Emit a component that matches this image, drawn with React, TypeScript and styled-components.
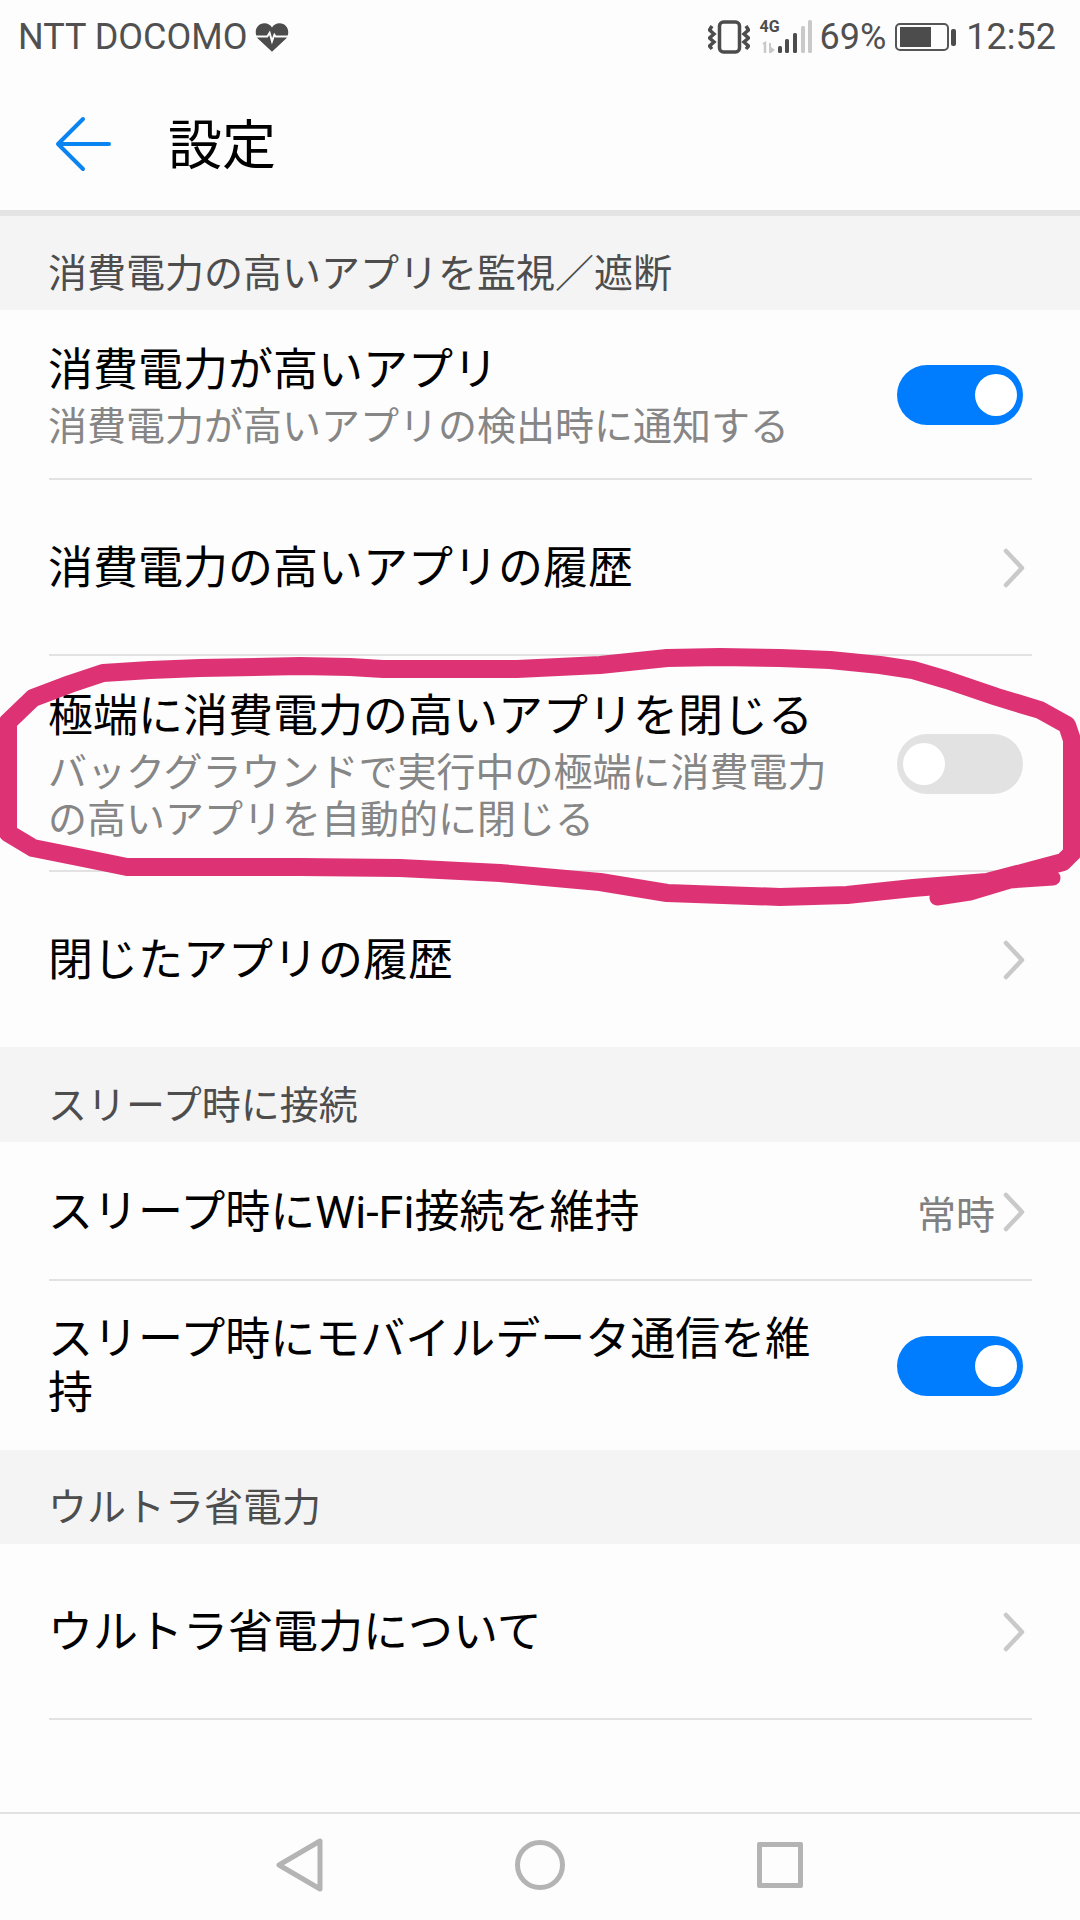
import React from 'react';
import styled, { createGlobalStyle } from 'styled-components';

const GlobalStyle = createGlobalStyle`
  html, body {
    margin: 0;
    padding: 0;
    background: #fdfdfd;
  }
`;

const FONT = `Roboto, "Noto Sans CJK JP", sans-serif`;

// hand drawn marker ring, traced from the screenshot
const RING =
  'M8 722 L33 698 L70 684 L103 673 L150 670 L200 668 L300 666 L350 667 L383 669 L517 669 L600 665 L667 658 L720 657 ' +
  'L780 658 L830 660 L880 665 L913 670 L947 680 L997 697 L1040 710 L1067 725 L1072 740 L1072 853 L1063 862 L1033 870 ' +
  'L987 882 L913 888 L847 895 L780 897 L667 893 L600 882 L500 873 L400 868 L300 867 L127 867 L83 858 L33 848 L8 833 Z';

function Chevron(): JSX.Element {
  return (
    <ChevronSvg viewBox="0 0 22 40" fill="none">
      <path
        d="M3 3 L19 20 L3 37"
        stroke="#c9c9c9"
        strokeWidth="4.5"
        strokeLinecap="round"
        strokeLinejoin="round"
      />
    </ChevronSvg>
  );
}

function Annotation(): JSX.Element {
  return (
    <AnnotationSvg viewBox="0 0 1080 1920" fill="none">
      <path d={RING} stroke="#dd3375" strokeWidth="18" strokeLinejoin="round" />
      <path
        d="M937 898 L970 893 L1010 881 L1053 878"
        stroke="#dd3375"
        strokeWidth="15"
        strokeLinecap="round"
        strokeLinejoin="round"
      />
    </AnnotationSvg>
  );
}

function StatusIcons(): JSX.Element {
  return (
    <StatusRight>
      <svg width="42" height="34" viewBox="0 0 42 34" fill="none" stroke="#4c4c4c">
        <rect x="11.5" y="2" width="20" height="30" rx="4" strokeWidth="3.5" />
        <path d="M4 6 L1.500 10 L6 14 L1.500 18 L6 22 L1.500 26 L4 29" strokeWidth="3.5" />
        <path d="M38 6 L40.500 10 L36 14 L40.500 18 L36 22 L40.500 26 L38 29" strokeWidth="3.5" />
      </svg>
      <SignalWrap>
        <NetworkLabel>4G</NetworkLabel>
        <svg width="52" height="34" viewBox="0 0 52 34">
          <path d="M3 24 L5 23 V33" stroke="#c9c9c9" strokeWidth="2.5" fill="none" />
          <path d="M9 23 H11 V27 L15 30 L11 33 H9 Z" fill="#c9c9c9" />
          <rect x="18" y="26" width="4" height="7" rx="1.5" fill="#4c4c4c" />
          <rect x="25" y="19" width="4" height="14" rx="1.5" fill="#4c4c4c" />
          <rect x="33" y="13" width="4" height="20" rx="1.5" fill="#4c4c4c" />
          <rect x="41" y="6" width="4" height="27" rx="1.5" fill="#c9c9c9" />
          <rect x="48" y="0" width="4" height="33" rx="1.5" fill="#c9c9c9" />
        </svg>
      </SignalWrap>
      <Percent>69%</Percent>
      <Battery>
        <BatteryFill />
      </Battery>
      <BatteryTip />
      <Clock>12:52</Clock>
    </StatusRight>
  );
}

interface IRowProps {
  title: string;
  sub?: string;
  height: number;
  detail?: string;
  toggle?: 'on' | 'off';
  chevron?: boolean;
  noDivider?: boolean;
}

function SettingRow({ title, sub, height, detail, toggle, chevron, noDivider }: IRowProps): JSX.Element {
  return (
    <Row $height={height} $noDivider={noDivider}>
      <RowText>
        <RowTitle>{title}</RowTitle>
        {sub && <RowSub>{sub}</RowSub>}
      </RowText>
      {detail && <Detail>{detail}</Detail>}
      {chevron && <Chevron />}
      {toggle && (
        <Toggle $on={toggle === 'on'}>
          <Knob />
        </Toggle>
      )}
    </Row>
  );
}

export default function App(): JSX.Element {
  return (
    <Page>
      <GlobalStyle />
      <StatusBar>
        <Carrier>NTT DOCOMO</Carrier>
        <HeartIcon viewBox="0 0 36 32">
          <path
            d="M18 31 L3 17 C-2 10 2 1 10 1 C13.500 1 16.500 3 18 5.500 C19.500 3 22.500 1 26 1 C34 1 38 10 33 17 Z"
            fill="#4c4c4c"
          />
          <path
            d="M0 15 H13 L15.500 11 L18 20 L20.500 13 L22 15 H36"
            stroke="#fdfdfd"
            strokeWidth="2"
            fill="none"
          />
        </HeartIcon>
        <StatusIcons />
      </StatusBar>

      <Header>
        <BackIcon viewBox="0 0 56 56" fill="none">
          <path
            d="M28 3 L3 28 L28 53 M3 28 H54"
            stroke="#0a84f0"
            strokeWidth="4"
            strokeLinecap="round"
            strokeLinejoin="round"
          />
        </BackIcon>
        <HeaderTitle>設定</HeaderTitle>
      </Header>

      <SectionHead $height={94}>消費電力の高いアプリを監視／遮断</SectionHead>
      <SettingRow height={170} title="消費電力が高いアプリ" sub="消費電力が高いアプリの検出時に通知する" toggle="on" />
      <SettingRow height={176} title="消費電力の高いアプリの履歴" chevron />
      <SettingRow
        height={216}
        title="極端に消費電力の高いアプリを閉じる"
        sub="バックグラウンドで実行中の極端に消費電力の高いアプリを自動的に閉じる"
        toggle="off"
      />
      <SettingRow height={175} title="閉じたアプリの履歴" chevron noDivider />

      <SectionHead $height={95}>スリープ時に接続</SectionHead>
      <SettingRow height={139} title="スリープ時にWi-Fi接続を維持" detail="常時" chevron />
      <SettingRow height={169} title="スリープ時にモバイルデータ通信を維持" toggle="on" noDivider />

      <SectionHead $height={94}>ウルトラ省電力</SectionHead>
      <SettingRow height={176} title="ウルトラ省電力について" chevron />

      <NavBar>
        <NavSlot>
          <svg width="48" height="54" viewBox="0 0 48 54" fill="none">
            <path d="M44 3 L44 51 L3 27 Z" stroke="#b4b4b4" strokeWidth="5" strokeLinejoin="round" />
          </svg>
        </NavSlot>
        <NavSlot>
          <NavCircle />
        </NavSlot>
        <NavSlot>
          <NavSquare />
        </NavSlot>
      </NavBar>
      <Annotation />
    </Page>
  );
}

const Page = styled.div`
  position: relative;
  width: 1080px;
  height: 1920px;
  overflow: hidden;
  display: flex;
  flex-direction: column;
  background: #fdfdfd;
  font-family: ${FONT};
`;

const StatusBar = styled.div`
  height: 72px;
  box-sizing: border-box;
  padding: 2px 24px 0 18px;
  display: flex;
  align-items: center;
  color: #505050;
`;

const Carrier = styled.span`
  font-size: 36px;
`;

const HeartIcon = styled.svg`
  width: 34px;
  height: 31px;
  margin-left: 8px;
`;

const StatusRight = styled.div`
  margin-left: auto;
  display: flex;
  align-items: center;
`;

const SignalWrap = styled.div`
  position: relative;
  margin-left: 10px;
  width: 52px;
  height: 34px;
`;

const NetworkLabel = styled.span`
  position: absolute;
  left: 0;
  top: -3px;
  font-size: 16px;
  font-weight: 700;
  color: #4c4c4c;
`;

const Percent = styled.span`
  margin-left: 8px;
  font-size: 36px;
`;

const Battery = styled.div`
  margin-left: 9px;
  width: 54px;
  height: 28px;
  box-sizing: border-box;
  border: 2px solid #555;
  border-radius: 5px;
  padding: 2px 3px;
`;

const BatteryFill = styled.div`
  width: 70%;
  height: 100%;
  background: #4c4c4c;
`;

const BatteryTip = styled.div`
  margin-left: 2px;
  width: 5px;
  height: 17px;
  border-radius: 2px;
  background: #4c4c4c;
`;

const Clock = styled.span`
  margin-left: 10px;
  font-size: 36px;
`;

const Header = styled.div`
  height: 138px;
  padding-left: 55px;
  display: flex;
  align-items: center;
  border-bottom: 6px solid #e4e4e4;
`;

const BackIcon = styled.svg`
  width: 56px;
  height: 56px;
  margin-top: 5px;
`;

const HeaderTitle = styled.h1`
  margin: 0 0 0 57px;
  font-size: 54px;
  font-weight: 400;
  color: #000;
`;

const SectionHead = styled.div<{ $height: number }>`
  height: ${(props) => props.$height}px;
  box-sizing: border-box;
  padding: 0 48px 12px;
  display: flex;
  align-items: flex-end;
  background: #f4f4f4;
  font-size: 39px;
  line-height: 48px;
  color: #4d4d4d;
`;

const Row = styled.div<{ $height: number; $noDivider?: boolean }>`
  height: ${(props) => props.$height}px;
  box-sizing: border-box;
  margin: 0 48px 0 49px;
  display: flex;
  align-items: center;
  border-bottom: 2px solid ${(props) => (props.$noDivider ? 'transparent' : '#e2e2e2')};
`;

const RowText = styled.div`
  width: 790px;
  margin: 0 auto 0 -1px;
  padding-top: 4px;
`;

const RowTitle = styled.div`
  font-size: 45px;
  line-height: 54px;
  color: #000;
`;

const RowSub = styled.div`
  margin: 6px 0 -3px;
  font-size: 39px;
  line-height: 47px;
  color: #868686;
`;

const Detail = styled.span`
  margin: 2px 8px 0 0;
  font-size: 39px;
  color: #808080;
`;

const ChevronSvg = styled.svg`
  width: 22px;
  height: 40px;
  flex: none;
  margin: 2px 7px 0 0;
`;

const Toggle = styled.div<{ $on: boolean }>`
  flex: none;
  width: 126px;
  height: 60px;
  margin: 2px 9px 0 0;
  box-sizing: border-box;
  padding: 9px 6px;
  display: flex;
  justify-content: ${(props) => (props.$on ? 'flex-end' : 'flex-start')};
  border-radius: 30px;
  background: ${(props) => (props.$on ? '#007dff' : '#e2e2e2')};
`;

const Knob = styled.div`
  width: 42px;
  height: 42px;
  border-radius: 50%;
  background: #fff;
`;

const NavBar = styled.div`
  margin-top: auto;
  height: 108px;
  box-sizing: border-box;
  padding-bottom: 4px;
  display: flex;
  justify-content: center;
  border-top: 2px solid #e2e2e2;
`;

const NavSlot = styled.div`
  width: 240px;
  display: flex;
  align-items: center;
  justify-content: center;
`;

const NavCircle = styled.div`
  width: 50px;
  height: 50px;
  box-sizing: border-box;
  border: 5px solid #b4b4b4;
  border-radius: 50%;
`;

const NavSquare = styled.div`
  width: 46px;
  height: 46px;
  box-sizing: border-box;
  border: 5px solid #b4b4b4;
  border-radius: 2px;
`;

const AnnotationSvg = styled.svg`
  position: absolute;
  inset: 0;
  width: 1080px;
  height: 1920px;
  pointer-events: none;
`;
